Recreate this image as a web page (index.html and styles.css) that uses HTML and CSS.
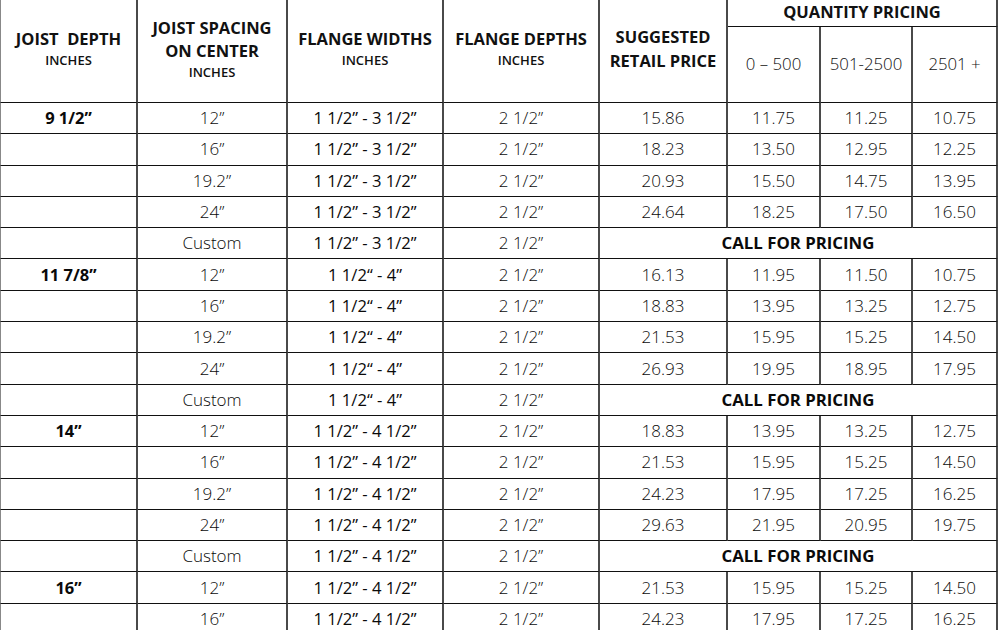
FILE: index.html
```html
<!DOCTYPE html>
<html>
<head>
<meta charset="utf-8">
<link rel="stylesheet" href="styles.css">
</head>
<body>
<table class="price">
  <colgroup>
    <col class="c1"><col class="c2"><col class="c3"><col class="c4"><col class="c5"><col class="c6"><col class="c7"><col class="c8">
  </colgroup>
  <thead>
    <tr class="hr1">
      <th rowspan="2" class="first"><div class="hm">JOIST&nbsp; DEPTH</div><div class="hs">INCHES</div></th>
      <th rowspan="2"><div class="hm">JOIST SPACING</div><div class="hm">ON CENTER</div><div class="hs">INCHES</div></th>
      <th rowspan="2"><div class="hm">FLANGE WIDTHS</div><div class="hs">INCHES</div></th>
      <th rowspan="2"><div class="hm">FLANGE DEPTHS</div><div class="hs">INCHES</div></th>
      <th rowspan="2"><div class="hm hm2">SUGGESTED</div><div class="hm hm2">RETAIL PRICE</div></th>
      <th colspan="3" class="qp">QUANTITY PRICING</th>
    </tr>
    <tr class="hr2">
      <th class="qn">0 – 500</th>
      <th class="qn">501-2500</th>
      <th class="qn">2501 +</th>
    </tr>
  </thead>
  <tbody>
    <tr><td class="first dp">9 1/2”</td><td>12”</td><td class="fw">1 1/2” - 3 1/2”</td><td>2 1/2”</td><td>15.86</td><td>11.75</td><td>11.25</td><td>10.75</td></tr>
    <tr><td class="first"></td><td>16”</td><td class="fw">1 1/2” - 3 1/2”</td><td>2 1/2”</td><td>18.23</td><td>13.50</td><td>12.95</td><td>12.25</td></tr>
    <tr><td class="first"></td><td>19.2”</td><td class="fw">1 1/2” - 3 1/2”</td><td>2 1/2”</td><td>20.93</td><td>15.50</td><td>14.75</td><td>13.95</td></tr>
    <tr><td class="first"></td><td>24”</td><td class="fw">1 1/2” - 3 1/2”</td><td>2 1/2”</td><td>24.64</td><td>18.25</td><td>17.50</td><td>16.50</td></tr>
    <tr><td class="first"></td><td>Custom</td><td class="fw">1 1/2” - 3 1/2”</td><td>2 1/2”</td><td colspan="4" class="call">CALL FOR PRICING</td></tr>
    <tr><td class="first dp">11 7/8”</td><td>12”</td><td class="fw">1 1/2“ - 4”</td><td>2 1/2”</td><td>16.13</td><td>11.95</td><td>11.50</td><td>10.75</td></tr>
    <tr><td class="first"></td><td>16”</td><td class="fw">1 1/2“ - 4”</td><td>2 1/2”</td><td>18.83</td><td>13.95</td><td>13.25</td><td>12.75</td></tr>
    <tr><td class="first"></td><td>19.2”</td><td class="fw">1 1/2“ - 4”</td><td>2 1/2”</td><td>21.53</td><td>15.95</td><td>15.25</td><td>14.50</td></tr>
    <tr><td class="first"></td><td>24”</td><td class="fw">1 1/2“ - 4”</td><td>2 1/2”</td><td>26.93</td><td>19.95</td><td>18.95</td><td>17.95</td></tr>
    <tr><td class="first"></td><td>Custom</td><td class="fw">1 1/2“ - 4”</td><td>2 1/2”</td><td colspan="4" class="call">CALL FOR PRICING</td></tr>
    <tr><td class="first dp">14”</td><td>12”</td><td class="fw">1 1/2” - 4 1/2”</td><td>2 1/2”</td><td>18.83</td><td>13.95</td><td>13.25</td><td>12.75</td></tr>
    <tr><td class="first"></td><td>16”</td><td class="fw">1 1/2” - 4 1/2”</td><td>2 1/2”</td><td>21.53</td><td>15.95</td><td>15.25</td><td>14.50</td></tr>
    <tr><td class="first"></td><td>19.2”</td><td class="fw">1 1/2” - 4 1/2”</td><td>2 1/2”</td><td>24.23</td><td>17.95</td><td>17.25</td><td>16.25</td></tr>
    <tr><td class="first"></td><td>24”</td><td class="fw">1 1/2” - 4 1/2”</td><td>2 1/2”</td><td>29.63</td><td>21.95</td><td>20.95</td><td>19.75</td></tr>
    <tr><td class="first"></td><td>Custom</td><td class="fw">1 1/2” - 4 1/2”</td><td>2 1/2”</td><td colspan="4" class="call">CALL FOR PRICING</td></tr>
    <tr><td class="first dp">16”</td><td>12”</td><td class="fw">1 1/2” - 4 1/2”</td><td>2 1/2”</td><td>21.53</td><td>15.95</td><td>15.25</td><td>14.50</td></tr>
    <tr><td class="first"></td><td>16”</td><td class="fw">1 1/2” - 4 1/2”</td><td>2 1/2”</td><td>24.23</td><td>17.95</td><td>17.25</td><td>16.25</td></tr>
  </tbody>
</table>
</body>
</html>
```
FILE: styles.css
```css
html, body {
  margin: 0;
  padding: 0;
  background: #fff;
  overflow: hidden;
}
body {
  font-family: "Open Sans", "Liberation Sans", sans-serif;
  color: #111;
}
.price {
  border-collapse: separate;
  border-spacing: 0;
  table-layout: fixed;
  width: 998px;
}
.c1 { width: 138px; }
.c2 { width: 150px; }
.c3 { width: 156px; }
.c4 { width: 156px; }
.c5 { width: 128px; }
.c6 { width: 93px; }
.c7 { width: 92px; }
.c8 { width: 85px; }
th, td {
  box-sizing: border-box;
  padding: 0;
  text-align: center;
  vertical-align: middle;
  border-right: 2px solid #4a4a4a;
  border-bottom: 1px solid #111;
}
.first {
  border-left: 1px solid #888;
}
th {
  font-weight: 700;
  color: #111;
}
.hm {
  font-size: 16.5px;
  line-height: 23px;
  font-weight: 700;
}
.hm2 {
  line-height: 24px;
}
.hs {
  font-size: 13px;
  line-height: 21px;
  font-weight: 600;
}
.hr1 th { height: 26px; }
.hr1 th[rowspan] { padding-bottom: 4px; }
.qp {
  font-size: 16.5px;
  line-height: 24px;
  padding-bottom: 2px;
}
.hr2 th { height: 76px; }
.qn {
  font-size: 16.8px;
  font-weight: 300;
  padding-bottom: 2px;
}
td {
  height: 31.3px;
  font-size: 17px;
  font-weight: 300;
  line-height: 20px;
  color: #0a0a0a;
}
.fw { font-weight: 400; font-size: 16.6px; }
.dp { font-weight: 700; font-size: 16.5px; }
.call {
  font-weight: 700;
  font-size: 16.8px;
}
```
